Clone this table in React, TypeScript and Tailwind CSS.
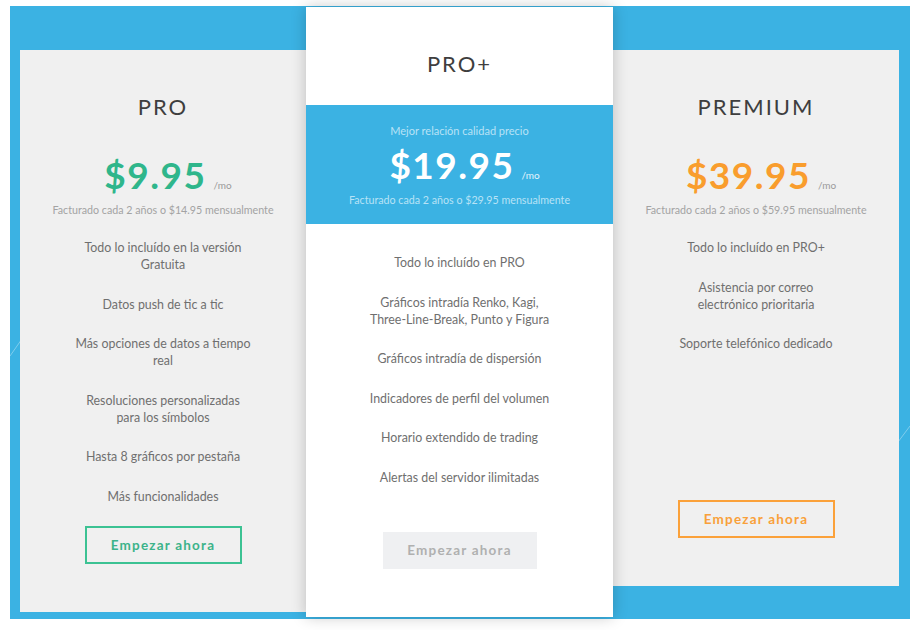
const FONT = "font-['Lato','Liberation_Sans',sans-serif]"

type Plan = {
  name: string
  price: string
  billed: string
  features: string[][]
  accent: 'green' | 'orange'
}

const pro: Plan = {
  name: 'PRO',
  price: '$9.95',
  billed: 'Facturado cada 2 años o $14.95 mensualmente',
  accent: 'green',
  features: [
    ['Todo lo incluído en la versión', 'Gratuita'],
    ['Datos push de tic a tic'],
    ['Más opciones de datos a tiempo', 'real'],
    ['Resoluciones personalizadas', 'para los símbolos'],
    ['Hasta 8 gráficos por pestaña'],
    ['Más funcionalidades'],
  ],
}

const premium: Plan = {
  name: 'PREMIUM',
  price: '$39.95',
  billed: 'Facturado cada 2 años o $59.95 mensualmente',
  accent: 'orange',
  features: [
    ['Todo lo incluído en PRO+'],
    ['Asistencia por correo', 'electrónico prioritaria'],
    ['Soporte telefónico dedicado'],
  ],
}

const proPlus = [
  ['Todo lo incluído en PRO'],
  ['Gráficos intradía Renko, Kagi,', 'Three-Line-Break, Punto y Figura'],
  ['Gráficos intradía de dispersión'],
  ['Indicadores de perfil del volumen'],
  ['Horario extendido de trading'],
  ['Alertas del servidor ilimitadas'],
]

function Features({ items }: { items: string[][] }) {
  return (
    <ul className="flex flex-col gap-[22.5px] text-[12.4px] leading-[17px] text-[#6f6f6f]">
      {items.map((lines, i) => (
        <li key={i} className="text-center">
          {lines.map((l) => (
            <div key={l}>{l}</div>
          ))}
        </li>
      ))}
    </ul>
  )
}

function SideCard({ plan, className }: { plan: Plan; className: string }) {
  const green = plan.accent === 'green'
  return (
    <div className={`flex flex-col items-center bg-[#f0f0f0] pt-[44px] pb-[48px] ${className}`}>
      <h2 className="text-[22px] leading-[26px] tracking-[2px] text-[#3e3e3e]">{plan.name}</h2>
      <div className="mt-[35px] flex items-baseline pl-[10px]">
        <span
          className={`text-[37px] leading-[40px] font-bold tracking-[1.5px] ${
            green ? 'text-[#2fb68b]' : 'text-[#f99d2d]'
          }`}
        >
          {plan.price}
        </span>
        <span className="ml-[7px] text-[10px] text-[#9a9a9a]">/mo</span>
      </div>
      <p className="mt-[8px] text-[10.7px] leading-[14px] text-[#a3a3a3]">{plan.billed}</p>
      <div className="mt-[22px]">
        <Features items={plan.features} />
      </div>
      <button
        className={`mt-auto h-[38px] w-[157px] border-2 bg-transparent text-[13.5px] font-bold tracking-[1.2px] ${
          green ? 'border-[#3cc293] text-[#3cb38a]' : 'border-[#fba13a] text-[#f9a03a]'
        }`}
      >
        Empezar ahora
      </button>
    </div>
  )
}

export default function App() {
  return (
    <div className={`h-[630px] w-[922px] bg-white pl-[10px] pt-[6px] ${FONT}`}>
      <div className="relative flex h-[613px] w-[900px] items-start bg-[#3bb2e3] pl-[10px]">
        <svg className="pointer-events-none absolute inset-0" width="900" height="613">
          <line x1="0" y1="350" x2="14" y2="330" stroke="#ffffff" strokeOpacity="0.35" strokeWidth="1" />
          <line x1="888" y1="436" x2="900" y2="420" stroke="#ffffff" strokeOpacity="0.35" strokeWidth="1" />
        </svg>

        <SideCard plan={pro} className="relative mt-[44px] h-[562px] w-[286px]" />

        <div className="relative z-10 mt-[1px] flex h-[610px] w-[307px] flex-col items-center bg-white pb-[48px] shadow-[0_0_14px_rgba(0,0,0,0.22)]">
          <h2 className="mt-[44px] text-[22px] leading-[26px] tracking-[2px] text-[#3e3e3e]">PRO+</h2>
          <div className="mt-[28px] flex h-[119px] w-full flex-col items-center bg-[#3bb2e3] pt-[19px]">
            <p className="text-[11px] leading-[14px] text-[#b8e2f6]">Mejor relación calidad precio</p>
            <div className="mt-[7px] flex items-baseline pl-[10px]">
              <span className="text-[37px] font-bold leading-[40px] tracking-[1.5px] text-white">$19.95</span>
              <span className="ml-[7px] text-[10px] text-[#e4f4fc]">/mo</span>
            </div>
            <p className="mt-[8px] text-[10.7px] leading-[14px] text-[#b8e2f6]">
              Facturado cada 2 años o $29.95 mensualmente
            </p>
          </div>
          <div className="mt-[30px]">
            <Features items={proPlus} />
          </div>
          <button className="mt-auto h-[37px] w-[154px] bg-[#eff0f2] text-[13.5px] font-bold tracking-[1.2px] text-[#b0b0b0]">
            Empezar ahora
          </button>
        </div>

        <SideCard plan={premium} className="relative mt-[44px] h-[536px] w-[286px]" />
      </div>
    </div>
  )
}
